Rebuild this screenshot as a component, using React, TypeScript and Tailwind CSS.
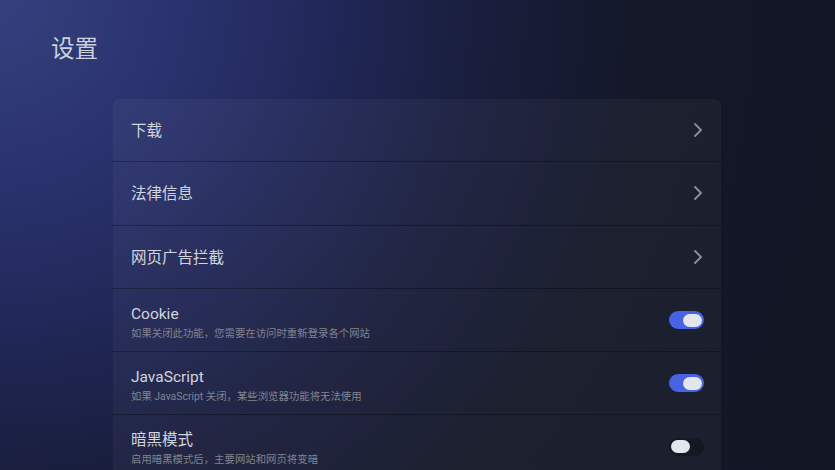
import React from 'react';
import { ChevronRight } from 'lucide-react';

type Row =
  | { kind: 'link'; title: string }
  | { kind: 'toggle'; title: string; desc: string; on: boolean };

const rows: Row[] = [
  { kind: 'link', title: '下载' },
  { kind: 'link', title: '法律信息' },
  { kind: 'link', title: '网页广告拦截' },
  { kind: 'toggle', title: 'Cookie', desc: '如果关闭此功能，您需要在访问时重新登录各个网站', on: true },
  { kind: 'toggle', title: 'JavaScript', desc: '如果 JavaScript 关闭，某些浏览器功能将无法使用', on: true },
  { kind: 'toggle', title: '暗黑模式', desc: '启用暗黑模式后，主要网站和网页将变暗', on: false },
];

function Toggle({ on }: { on: boolean }) {
  return (
    <div
      className={`flex h-[18px] w-[35px] items-center rounded-full px-[2px] ${
        on ? 'justify-end bg-[#4762e3]' : 'justify-start bg-[#151822]'
      }`}
    >
      <div className="h-[13px] w-[19px] rounded-full bg-[#e4e6ee]" />
    </div>
  );
}

export default function App() {
  return (
    <div
      className="h-[470px] w-[835px] overflow-hidden bg-[#121625] bg-[radial-gradient(circle_at_0%_0%,#34407e_0%,#28306a_22%,#1f2551_38%,#181d3a_52%,#131727_68%,#121625_100%)]"
      style={{ fontFamily: 'Roboto, "Noto Sans CJK SC", sans-serif' }}
    >
      {/* Header */}
      <h1 className="pl-[51px] pt-[34px] text-[23.5px] leading-[30px] font-normal text-[#ccd0dc]">设置</h1>

      {/* Settings list */}
      <div className="ml-[113px] mt-[35px] w-[608px] overflow-hidden rounded-t-[6px] bg-white/[0.04]">
        {rows.map((row, i) => (
          <div
            key={i}
            className="flex h-[63.3px] items-center justify-between border-b border-black/30 pl-[18px]"
          >
            {row.kind === 'link' ? (
              <>
                <span className="pt-[2px] text-[15.5px] leading-[20px] text-[#d2d5de]">{row.title}</span>
                <ChevronRight size={24} strokeWidth={1.8} className="mr-[11px] text-[#8d909b]" />
              </>
            ) : (
              <>
                <div className="flex flex-col pt-[4px]">
                  <span className="text-[15.5px] leading-[20px] text-[#d2d5de]">{row.title}</span>
                  <span className="mt-[3px] text-[10.4px] leading-[14px] text-[#80848f]">{row.desc}</span>
                </div>
                <div className="mr-[17px]">
                  <Toggle on={row.on} />
                </div>
              </>
            )}
          </div>
        ))}
      </div>
    </div>
  );
}
